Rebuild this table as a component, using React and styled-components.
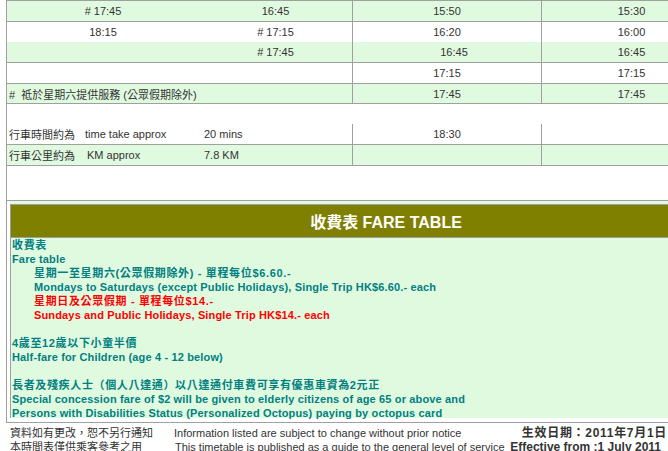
import React from 'react'
import styled, { createGlobalStyle } from 'styled-components'

const GREEN = '#e0fae0'
const LINE = '#a0a0a0'

const GlobalStyle = createGlobalStyle`
  body {
    margin: 0;
    overflow: hidden;
    background: #fff;
    color: #333;
    font-family: 'Liberation Sans', 'Noto Sans CJK TC', sans-serif;
  }
`

const Page = styled.div`
  width: 754px;
  margin-left: 6px;
  border-left: 1px solid ${LINE};
`

const Row = styled.div`
  display: grid;
  grid-template-columns: 192px 153px 189px 180px 1fr;
  height: ${({ $h }) => $h || 20}px;
  background: ${({ $green }) => ($green ? GREEN : '#fff')};
  border-top: ${({ $top }) => ($top ? `1px solid ${LINE}` : 'none')};
  border-bottom: ${({ $line }) => ($line ? `1px solid ${LINE}` : 'none')};
  font-size: 11px;
`

const Cell = styled.div`
  display: flex;
  align-items: center;
  justify-content: ${({ $left }) => ($left ? 'flex-start' : 'center')};
  padding-left: ${({ $pl }) => $pl || 0}px;
  border-left: ${({ $divided }) => ($divided ? `1px solid ${LINE}` : 'none')};
  grid-column: ${({ $span }) => ($span ? `span ${$span}` : 'auto')};
  white-space: nowrap;
`

const Info = styled.div`
  grid-column: span 2;
  display: grid;
  grid-template-columns: 76px 119px 1fr;
  align-items: center;
  white-space: nowrap;
`

const InfoText = styled.span`
  padding-left: ${({ $pl }) => $pl || 2}px;
`

const Spacer = styled.div`
  height: ${({ $h }) => $h}px;
`

const Fare = styled.div`
  border-top: 1px solid ${LINE};
  padding: 0 0 4px 3px;
`

const FareBox = styled.div`
  background: ${GREEN};
  padding-top: 3px;
`

const FareTable = styled.div`
  border-top: 1px solid ${LINE};
  border-left: 1px solid ${LINE};
`

const FareTitle = styled.div`
  height: 32px;
  display: flex;
  align-items: center;
  justify-content: center;
  background: #808000;
  color: #fff;
  font-size: 16px;
  font-weight: bold;
  border-bottom: 1px solid ${LINE};
`

const FareBody = styled.div`
  height: 180px;
  padding-left: 1px;
  background: ${GREEN};
  color: #008080;
  font-size: 11px;
  font-weight: bold;
  line-height: 14px;
  white-space: nowrap;
`

const FareLine = styled.div`
  padding-left: ${({ $indent }) => ($indent ? 22 : 0)}px;
  margin-top: ${({ $gap }) => ($gap ? 14 : 0)}px;
  color: ${({ $red }) => ($red ? '#ff0000' : 'inherit')};
  letter-spacing: ${({ $cjk }) => ($cjk ? '0.65px' : '0.15px')};
`

const Footer = styled.div`
  width: 754px;
  margin-left: 6px;
  padding: 3px 0 0 4px;
  border-top: 1px solid ${LINE};
  display: grid;
  grid-template-columns: 164px 328px 165px;
  font-size: 11px;
  line-height: 14px;
  white-space: nowrap;
`

const Note = styled.div`
  padding-left: ${({ $pl }) => $pl || 0}px;
`

const Effective = styled.div`
  text-align: right;
  font-size: 12px;
  font-weight: bold;
  letter-spacing: ${({ $cjk }) => ($cjk ? '0.7px' : '0')};
  padding-right: ${({ $pr }) => $pr || 0}px;
`

const times = [
  { h: 20, top: true, green: true, line: true, cells: ['# 17:45', '16:45', '15:50', '15:30'] },
  { h: 20, cells: ['18:15', '# 17:15', '16:20', '16:00'] },
  { h: 20, green: true, line: true, cells: ['', '# 17:45', '16:45', '16:45'], shift: 14 },
  { h: 20, line: true, cells: ['', '', '17:15', '17:15'] },
]

export default function App() {
  return (
    <>
      <GlobalStyle />
      <Page>
        {times.map((r, i) => (
          <Row key={i} $h={r.h} $top={r.top} $green={r.green} $line={r.line}>
            <Cell>{r.cells[0]}</Cell>
            <Cell>{r.cells[1]}</Cell>
            <Cell $divided $pl={r.shift}>{r.cells[2]}</Cell>
            <Cell $divided>{r.cells[3]}</Cell>
            <Cell />
          </Row>
        ))}
        <Row $h={19} $green $line>
          <Cell $span={2} $left $pl={2}># &nbsp;祗於星期六提供服務 (公眾假期除外)</Cell>
          <Cell $divided>17:45</Cell>
          <Cell $divided>17:45</Cell>
          <Cell />
        </Row>
        <Spacer $h={20} />
        <Row $line>
          <Info>
            <InfoText>行車時間約為</InfoText>
            <InfoText>time take approx</InfoText>
            <InfoText>20 mins</InfoText>
          </Info>
          <Cell $divided>18:30</Cell>
          <Cell $divided />
          <Cell />
        </Row>
        <Row $green $line>
          <Info>
            <InfoText>行車公里約為</InfoText>
            <InfoText $pl={4}>KM approx</InfoText>
            <InfoText>7.8 KM</InfoText>
          </Info>
          <Cell $divided />
          <Cell $divided />
          <Cell />
        </Row>
        <Spacer $h={34} />
        <Fare>
          <FareBox>
            <FareTable>
              <FareTitle>收費表 FARE TABLE</FareTitle>
              <FareBody>
                <FareLine $cjk>收費表</FareLine>
                <FareLine>Fare table</FareLine>
                <FareLine $indent $cjk>星期一至星期六(公眾假期除外) - 單程每位$6.60.-</FareLine>
                <FareLine $indent>Mondays to Saturdays (except Public Holidays), Single Trip HK$6.60.- each</FareLine>
                <FareLine $indent $red $cjk>星期日及公眾假期 - 單程每位$14.-</FareLine>
                <FareLine $indent $red>Sundays and Public Holidays, Single Trip HK$14.- each</FareLine>
                <FareLine $gap $cjk>4歲至12歲以下小童半價</FareLine>
                <FareLine>Half-fare for Children (age 4 - 12 below)</FareLine>
                <FareLine $gap $cjk>長者及殘疾人士（個人八達通）以八達通付車費可享有優惠車資為2元正</FareLine>
                <FareLine>Special concession fare of $2 will be given to elderly citizens of age 65 or above and</FareLine>
                <FareLine>Persons with Disabilities Status (Personalized Octopus) paying by octopus card</FareLine>
              </FareBody>
            </FareTable>
          </FareBox>
        </Fare>
      </Page>
      <Footer>
        <Note>資料如有更改，恕不另行通知</Note>
        <Note>Information listed are subject to change without prior notice</Note>
        <Effective $cjk>生效日期：2011年7月1日</Effective>
        <Note>本時間表僅供乘客參考之用</Note>
        <Note $pl={1}>This timetable is published as a guide to the general level of service</Note>
        <Effective $pr={6}>Effective from :1 July 2011</Effective>
      </Footer>
    </>
  )
}
